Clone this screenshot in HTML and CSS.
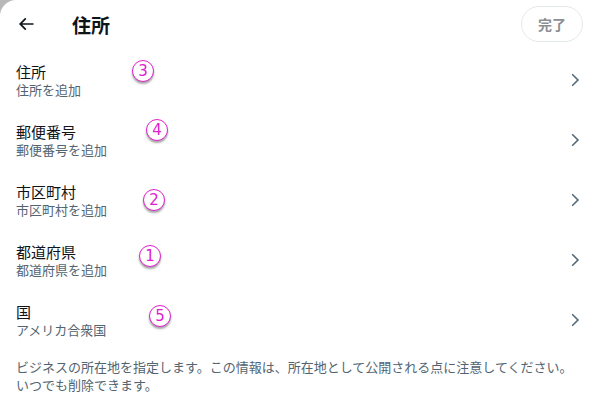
FILE: index.html
```html
<!DOCTYPE html>
<html>
<head>
    <title>住所</title>
    <link rel="stylesheet" href="styles.css">
</head>
<body>
    <div class="modal">
        <div class="header">
            <button class="back" aria-label="戻る">
                <svg viewBox="0 0 24 24" width="20" height="20"><path d="M7.414 13l5.043 5.04-1.414 1.42L3.586 12l7.457-7.46 1.414 1.42L7.414 11H21v2H7.414z"/></svg>
            </button>
            <h1>住所</h1>
            <button class="done">完了</button>
        </div>

        <div class="list">
            <div class="row">
                <div class="text">
                    <div class="label">住所</div>
                    <div class="sub">住所を追加</div>
                </div>
                <svg class="chev" viewBox="0 0 24 24" width="18" height="18"><path d="M14.586 12L7.543 4.96l1.414-1.42L17.414 12l-8.457 8.46-1.414-1.42L14.586 12z"/></svg>
            </div>
            <div class="row">
                <div class="text">
                    <div class="label">郵便番号</div>
                    <div class="sub">郵便番号を追加</div>
                </div>
                <svg class="chev" viewBox="0 0 24 24" width="18" height="18"><path d="M14.586 12L7.543 4.96l1.414-1.42L17.414 12l-8.457 8.46-1.414-1.42L14.586 12z"/></svg>
            </div>
            <div class="row">
                <div class="text">
                    <div class="label">市区町村</div>
                    <div class="sub">市区町村を追加</div>
                </div>
                <svg class="chev" viewBox="0 0 24 24" width="18" height="18"><path d="M14.586 12L7.543 4.96l1.414-1.42L17.414 12l-8.457 8.46-1.414-1.42L14.586 12z"/></svg>
            </div>
            <div class="row">
                <div class="text">
                    <div class="label">都道府県</div>
                    <div class="sub">都道府県を追加</div>
                </div>
                <svg class="chev" viewBox="0 0 24 24" width="18" height="18"><path d="M14.586 12L7.543 4.96l1.414-1.42L17.414 12l-8.457 8.46-1.414-1.42L14.586 12z"/></svg>
            </div>
            <div class="row">
                <div class="text">
                    <div class="label">国</div>
                    <div class="sub">アメリカ合衆国</div>
                </div>
                <svg class="chev" viewBox="0 0 24 24" width="18" height="18"><path d="M14.586 12L7.543 4.96l1.414-1.42L17.414 12l-8.457 8.46-1.414-1.42L14.586 12z"/></svg>
            </div>

            <!-- annotation marks -->
            <span class="mark m3">3</span>
            <span class="mark m4">4</span>
            <span class="mark m2">2</span>
            <span class="mark m1">1</span>
            <span class="mark m5">5</span>
        </div>

        <p class="note">ビジネスの所在地を指定します。この情報は、所在地として公開される点に注意してください。いつでも削除できます。</p>
    </div>
</body>
</html>
```

FILE: styles.css
```css
body {
    margin: 0;
    background-color: #b8b8b8;
    font-family: "Noto Sans CJK JP", "Liberation Sans", sans-serif;
    color: #0f1419;
}
.modal {
    background-color: #fff;
    border-top-left-radius: 16px;
    width: 593px;
    height: 416px;
}
.header {
    display: flex;
    align-items: center;
    height: 48px;
    padding: 0 10px 0 8px;
}
.back {
    width: 36px;
    height: 36px;
    border: none;
    background: none;
    padding: 0;
    display: flex;
    align-items: center;
    justify-content: center;
}
.back svg {
    fill: #0f1419;
}
h1 {
    margin: 0 0 0 28px;
    font-size: 19px;
    font-weight: 700;
    flex: 1;
}
.done {
    height: 36px;
    padding: 0 16px;
    border: 1px solid #e4e9ec;
    border-radius: 18px;
    background: #fff;
    color: #8b8f92;
    font-family: inherit;
    font-size: 14px;
    font-weight: 700;
}
.list {
    position: relative;
    margin-top: 2px;
}
.row {
    display: flex;
    align-items: center;
    height: 60px;
    padding: 0 16px;
}
.text {
    flex: 1;
}
.label {
    font-size: 15px;
    line-height: 19px;
}
.sub {
    font-size: 13px;
    line-height: 17px;
    color: #536471;
}
.chev {
    fill: #536471;
    margin-right: -7px;
}
.mark {
    position: absolute;
    width: 20px;
    height: 20px;
    border: 1.5px solid #e020d0;
    border-radius: 50%;
    background: #fff;
    color: #e020d0;
    font-family: "DejaVu Sans", sans-serif;
    font-size: 15px;
    line-height: 20px;
    text-align: center;
    box-shadow: 0 2px 2px rgba(0, 0, 0, 0.35);
}
.m3 { left: 132px; top: 10px; }
.m4 { left: 146px; top: 69px; }
.m2 { left: 143px; top: 139px; }
.m1 { left: 139px; top: 195px; }
.m5 { left: 149px; top: 255px; }
.note {
    margin: 8px 16px 0;
    font-size: 13px;
    line-height: 18px;
    color: #536471;
}
```
